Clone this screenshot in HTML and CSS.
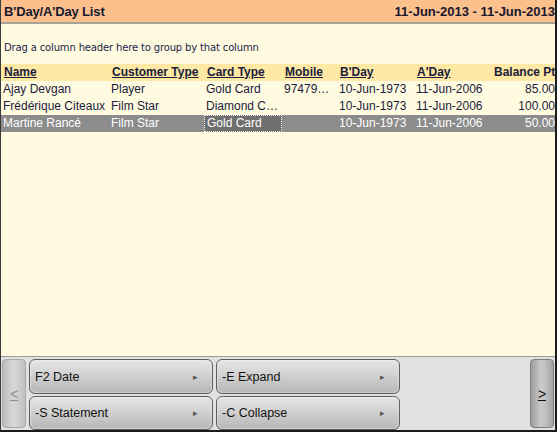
FILE: index.html
```html
<!DOCTYPE html>
<html>
<head>
<meta charset="utf-8">
<link rel="stylesheet" href="styles.css">
</head>
<body>
<div class="app">
  <div class="titlebar">
    <span class="title">B'Day/A'Day List</span>
    <span class="range">11-Jun-2013 - 11-Jun-2013</span>
  </div>
  <div class="content">
    <div class="hint">Drag a column header here to group by that column</div>
    <div class="grid">
      <div class="row head">
        <div class="cell"><u>Name</u></div>
        <div class="cell"><u>Customer Type</u></div>
        <div class="cell"><u>Card Type</u></div>
        <div class="cell"><u>Mobile</u></div>
        <div class="cell"><u>B'Day</u></div>
        <div class="cell"><u>A'Day</u></div>
        <div class="cell num">Balance Pt</div>
      </div>
      <div class="row">
        <div class="cell">Ajay Devgan</div>
        <div class="cell">Player</div>
        <div class="cell">Gold Card</div>
        <div class="cell">97479…</div>
        <div class="cell">10-Jun-1973</div>
        <div class="cell">11-Jun-2006</div>
        <div class="cell num">85.00</div>
      </div>
      <div class="row">
        <div class="cell">Frédérique Citeaux</div>
        <div class="cell">Film Star</div>
        <div class="cell">Diamond C…</div>
        <div class="cell"></div>
        <div class="cell">10-Jun-1973</div>
        <div class="cell">11-Jun-2006</div>
        <div class="cell num">100.00</div>
      </div>
      <div class="row selected">
        <div class="cell">Martine Rancé</div>
        <div class="cell">Film Star</div>
        <div class="cell focus">Gold Card</div>
        <div class="cell"></div>
        <div class="cell">10-Jun-1973</div>
        <div class="cell">11-Jun-2006</div>
        <div class="cell num">50.00</div>
      </div>
    </div>
  </div>
  <div class="toolbar">
    <div class="nav disabled"><u>&lt;</u></div>
    <div class="buttons">
      <div class="btn"><span>F2 Date</span><span class="arr">▸</span></div>
      <div class="btn"><span>-E Expand</span><span class="arr">▸</span></div>
      <div class="btn"><span>-S Statement</span><span class="arr">▸</span></div>
      <div class="btn"><span>-C Collapse</span><span class="arr">▸</span></div>
    </div>
    <div class="spacer"></div>
    <div class="nav"><u>&gt;</u></div>
  </div>
</div>
</body>
</html>
```
FILE: styles.css
```css
html, body {
  margin: 0;
  padding: 0;
}
body {
  font-family: "Liberation Sans", Arial, sans-serif;
  font-size: 12px;
  color: #1c1c3c;
  overflow: hidden;
}
.app {
  width: 557px;
  height: 432px;
  box-sizing: border-box;
  border-left: 1px solid #3a3a3a;
  border-right: 2px solid #1a1a1a;
  border-bottom: 2px solid #1a1a1a;
  display: flex;
  flex-direction: column;
  background: #fffbe1;
}
.titlebar {
  height: 22px;
  background: #fcc08c;
  border-bottom: 2px solid #a6a39a;
  display: flex;
  justify-content: space-between;
  align-items: center;
  padding: 0 0 0 3px;
  font-weight: bold;
  font-size: 13px;
  color: #17172e;
  white-space: nowrap;
  overflow: hidden;
}
.title {
  letter-spacing: -0.15px;
}
.range {
  margin-right: 0;
}
.content {
  flex: 1;
  background: #fffbe1;
  overflow: hidden;
}
.hint {
  font-family: "DejaVu Sans", sans-serif;
  font-size: 10px;
  letter-spacing: -0.15px;
  margin: 17px 0 0 3px;
  height: 14px;
  line-height: 14px;
  color: #1c1c48;
}
.grid {
  margin-top: 9px;
}
.row {
  display: grid;
  grid-template-columns: 108px 95px 78px 55px 77px 77px 1fr;
  height: 17px;
  line-height: 17px;
  white-space: nowrap;
}
.row.head {
  background: #fde9a4;
  font-weight: bold;
}
.row.head .cell {
  padding-left: 3px;
}
.cell {
  padding-left: 2px;
  overflow: hidden;
}
.cell.num {
  text-align: right;
  padding-right: 0;
}
.row.selected {
  background: #8c8c8c;
  color: #ffffff;
}
.cell.focus {
  background: #6f6f6f;
  outline: 1px dotted #ffffff;
  outline-offset: -1px;
  padding-left: 3px;
}
.toolbar {
  height: 74px;
  box-sizing: border-box;
  background: #e1e1e1;
  border-top: 1px solid #9c9c9c;
  display: flex;
  padding: 2px 1px 2px 1px;
  gap: 4px;
}
.nav {
  width: 24px;
  box-sizing: border-box;
  border: 1px solid #7d7d7d;
  border-radius: 4px;
  background: linear-gradient(to right, #9e9e9e, #c9c9c9 45%, #c4c4c4 60%, #a3a3a3);
  display: flex;
  align-items: center;
  justify-content: center;
  font-size: 14px;
  color: #111;
}
.nav.disabled {
  color: #8a8a8a;
  background: linear-gradient(to right, #bdbdbd, #d6d6d6 45%, #d2d2d2 60%, #c0c0c0);
  border-color: #a8a8a8;
}
.buttons {
  display: grid;
  grid-template-columns: 184px 184px;
  grid-template-rows: 35px 34px;
  gap: 2px 3px;
  margin-left: -1px;
}
.btn {
  box-sizing: border-box;
  border: 1px solid #5e5e5e;
  border-radius: 6px;
  background: linear-gradient(to bottom, #e6e6e6, #cfcfcf 50%, #b7b7b7);
  display: flex;
  align-items: center;
  justify-content: space-between;
  padding: 0 14px 0 5px;
  font-size: 12.5px;
  color: #111;
  box-shadow: inset 0 0 2px #ffffff;
}
.arr {
  font-size: 9px;
  color: #555;
}
.spacer {
  flex: 1;
}
```
